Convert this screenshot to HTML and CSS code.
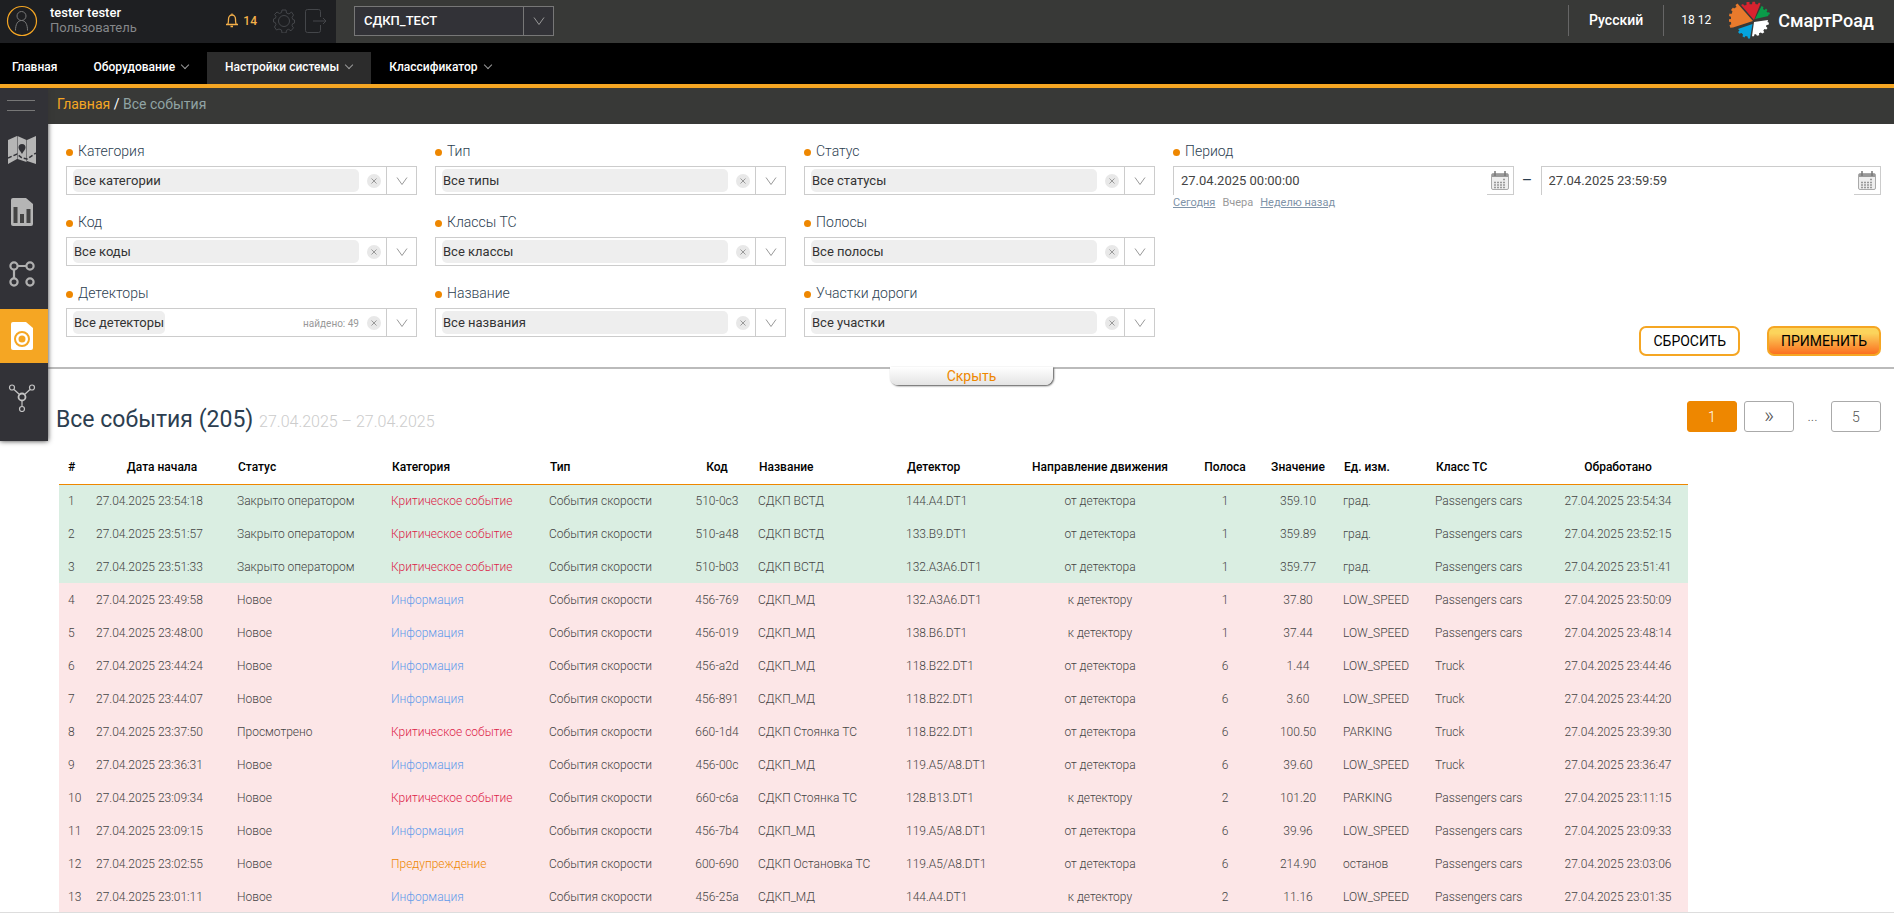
FILE: index.html
```
<!DOCTYPE html>
<html lang="ru">
<head>
    <meta charset="UTF-8">
    <meta name="viewport" content="width=device-width, initial-scale=1.0">
    <title>СмартРоад - Все события</title>
    <link rel="stylesheet" href="styles.css">
</head>
<body>

<header class="topbar">
    <div class="user">
        <svg class="avatar" viewBox="0 0 32 32" width="32" height="32" fill="none">
            <circle cx="16" cy="16" r="14.500" stroke="#f5a623" stroke-width="1.200"/>
            <path d="M15.500 6.500a4.500 4.500 0 0 1 0 9a4.500 4.500 0 0 1 0-9M9.500 25.500c0-6 2-10 6-10s6 4 6 10" stroke="#777"/>
        </svg>
        <div class="user-name">
            <b>tester tester</b>
            <span>Пользователь</span>
        </div>
        <a class="bell" href="#">
            <svg viewBox="0 0 14 15" width="14" height="15" fill="none" stroke="#f5b04a" stroke-width="1.300"><path d="M1 11.500h12M2.500 11.500c1-1 1-3 1-5.500a3.500 4 0 0 1 7 0c0 2.500 0 4.500 1 5.500M5.500 13.500h2.500M7 2V.5"/></svg>
            14
        </a>
        <button class="icon-btn" type="button" aria-label="Настройки">
            <svg viewBox="0 0 22 24" width="22" height="24" fill="none" stroke="#44464a"><circle cx="11" cy="12" r="5.500"/><path d="M9 1h4l.5 3 2.500 1 2.500-2 2 3-1.500 2.500.8 2 1.700.5v3l-2 .8-.5 2 1.500 2-2.500 3-2.500-1.500-2 1-.5 2.700H9l-.5-3-2.500-1L3.500 21l-2-3L3 15.500l-.8-2L.5 13v-3l2-.8.5-2L1.500 5.500 4 3l2.500 1.500 2-1z"/></svg>
        </button>
        <button class="icon-btn" type="button" aria-label="Выход">
            <svg viewBox="0 0 22 24" width="22" height="24" fill="none" stroke="#44464a"><path d="M15.500 8V2.500a2 2 0 0 0-2-2h-11a2 2 0 0 0-2 2v19a2 2 0 0 0 2 2h11a2 2 0 0 0 2-2V16M8 12h13M18 9l3 3-3 3"/></svg>
        </button>
    </div>
    <div class="project">
        <select aria-label="Проект">
            <option>СДКП_ТЕСТ</option>
        </select>
        <svg viewBox="0 0 12 8" width="12" height="8"><path d="M1 .5l5 7 5-7" fill="none" stroke="#999"/></svg>
    </div>
    <div class="topbar-right">
        <a class="lang" href="#">Русский</a>
        <span class="clock">18 12</span>
        <a class="logo" href="#">
            <svg viewBox="0 0 42 38" width="42" height="38">
                <path fill="#e87a2c" d="M25 20 9.500 2.500 7.500 4 8.500 6 6 7.500 5 6.500 3 9l1.500 1.500L3.500 13 1.500 12.500 1 15l2 .8V18l-2 .3v2.500l2 .2.200 2.200-1.700 1 .8 2.500L5 26.500z"/>
                <path fill="#d8232f" d="M26 19 13 4l2-1 1.300 1.600L18.500 4V1h3v2.300h2.500L24.500.8h2.500L27.500 3l2 .5L31 1.500l1.500 1z"/>
                <path fill="#0a9b49" d="M27 18 33.500 5l2 1-.5 2 1.500 1 1.500-1.500 1.500 1.500-1 1.500 1.500 1.200L41 11l1 2-2 1 .5 1z"/>
                <path fill="#fff" d="M26 21l14-2-.5 2 1.500.8-.5 2-2 .2-.5 1.500 1.500 1.500-1.200 1.500-1.800-.5-1.200 1.500 1 1.800-2 1.200-1.500-1-1.800.8.2 2-2.200.5-1-1.500h-1.500l-.5 2H24z"/>
                <path fill="#05a3dc" d="M24.500 23 22 37.500h-2l-.5-2-2-.5-1 1.500-2-1 .5-2-1.500-1.500-2 .8L10 31l1.500-1.500L10 28z"/>
            </svg>
            СмартРоад
        </a>
    </div>
</header>

<nav class="menu">
    <a href="#">Главная</a>
    <a href="#" class="has-sub">Оборудование</a>
    <a href="#" class="has-sub active">Настройки системы</a>
    <a href="#" class="has-sub">Классификатор</a>
</nav>

<div class="layout">
    <aside class="sidebar">
        <button class="burger" type="button" aria-label="Меню"></button>
        <a href="#" aria-label="Карта">
            <svg viewBox="0 0 28 28" width="28" height="28">
                <path fill="#b5b5b5" d="M0 4l9-4v23l-9 5zM9.500 0l9 4v22l-9-3zM19 4l9-4v28l-9-3z"/>
                <path fill="#323237" d="M14 18c-1.500-3-3.500-4.500-3.500-6.500a3.500 3.500 0 0 1 7 0c0 2-2 3.500-3.500 6.500z"/>
                <path d="M0 22l9-4 5 4 5 1 9-6" fill="none" stroke="#323237" stroke-width="1.500" stroke-dasharray="4 2"/>
            </svg>
        </a>
        <a href="#" aria-label="Отчёты">
            <svg viewBox="0 0 22 28" width="22" height="28">
                <path fill="#b5b5b5" d="M2 0h13l7 6v20a2 2 0 0 1-2 2H2a2 2 0 0 1-2-2V2a2 2 0 0 1 2-2z"/>
                <path fill="#444" d="M2.500 9h4v16h-4zM9 16h4v9H9zM15.500 11h4v14h-4z"/>
            </svg>
        </a>
        <a href="#" aria-label="Узлы">
            <svg viewBox="0 0 28 28" width="28" height="28" fill="none" stroke="#b0b0b0" stroke-width="2.200">
                <circle cx="6" cy="6" r="3.600"/><circle cx="22" cy="6" r="3.600"/><circle cx="6" cy="22" r="3.600"/><circle cx="22" cy="22" r="3.600"/>
                <path d="M10 6h8M6 10v8"/>
            </svg>
        </a>
        <a href="#" class="active" aria-label="События">
            <svg viewBox="0 0 22 28" width="22" height="28">
                <path fill="#fff" d="M2 0h13l7 6v20a2 2 0 0 1-2 2H2a2 2 0 0 1-2-2V2a2 2 0 0 1 2-2z"/>
                <circle cx="11" cy="17" r="7" fill="none" stroke="#f5a623" stroke-width="2"/>
                <circle cx="11" cy="17" r="3.500" fill="#f5a623"/>
            </svg>
        </a>
        <a href="#" aria-label="Сеть">
            <svg viewBox="0 0 28 28" width="28" height="28" fill="none" stroke="#c4c4c4" stroke-width="1.200">
                <circle cx="4" cy="3.500" r="2.500"/><circle cx="24" cy="3.500" r="2.500"/><circle cx="14" cy="25" r="2.500"/>
                <circle cx="14" cy="13" r="3.500" stroke-width="1.800"/>
                <path d="M6 5.500l5.500 5M22 5.500l-5.500 5M14 16.500v6"/>
            </svg>
        </a>
    </aside>

    <main>
        <div class="breadcrumbs">
            <a href="#">Главная</a> <i>/</i> <span>Все события</span>
        </div>

        <form class="filters">
            <div class="filter-grid" id="filters">
                <!-- выпадающие списки добавляются скриптом -->
                <div class="field period">
                    <label for="date-from">Период</label>
                    <div class="period-row">
                        <div class="date-box">
                            <input id="date-from" type="text" value="27.04.2025 00:00:00">
                            <button type="button" aria-label="Календарь"></button>
                        </div>
                        <span>–</span>
                        <div class="date-box">
                            <input aria-label="Период до" type="text" value="27.04.2025 23:59:59">
                            <button type="button" aria-label="Календарь"></button>
                        </div>
                    </div>
                    <div class="quick">
                        <a href="#">Сегодня</a>
                        <span>Вчера</span>
                        <a href="#">Неделю назад</a>
                    </div>
                </div>
                <div class="buttons">
                    <button class="btn" type="reset">СБРОСИТЬ</button>
                    <button class="btn btn-apply" type="button">ПРИМЕНИТЬ</button>
                </div>
            </div>
            <button class="hide-tab" type="button">Скрыть</button>
        </form>

        <div class="title-row">
            <h1>Все события (205) <small>27.04.2025 – 27.04.2025</small></h1>
            <div class="pager">
                <button class="current" type="button">1</button>
                <button class="next" type="button">»</button>
                <span>...</span>
                <button type="button">5</button>
            </div>
        </div>

        <table class="events">
            <thead>
            <tr>
                <th class="num">#</th>
                <th class="date center">Дата начала</th>
                <th class="status">Статус</th>
                <th class="category">Категория</th>
                <th class="type">Тип</th>
                <th class="code center">Код</th>
                <th class="name">Название</th>
                <th class="detector">Детектор</th>
                <th class="direction center">Направление движения</th>
                <th class="lane center">Полоса</th>
                <th class="value center">Значение</th>
                <th class="unit">Ед. изм.</th>
                <th class="vehicle">Класс ТС</th>
                <th class="processed center">Обработано</th>
            </tr>
            </thead>
            <tbody id="data-table"></tbody>
        </table>
    </main>
</div>

<script src="script.js"></script>
</body>
</html>
```
FILE: styles.css
```
* {
    box-sizing: border-box;
}
body {
    margin: 0;
    height: 100vh;
    overflow: hidden;
    background: #fff;
    color: #2c3e50;
    font-family: Roboto, "Liberation Sans", sans-serif;
    font-size: 13px;
}
a {
    color: inherit;
    text-decoration: none;
}
button, input, select {
    font-family: inherit;
    margin: 0;
}
button {
    cursor: pointer;
}

/* Верхняя панель */
.topbar {
    display: flex;
    height: 43px;
    background: #383937;
    color: #fff;
}
.user {
    display: flex;
    align-items: center;
    width: 336px;
    padding: 0 9px 2px 6px;
    background: #1e1f22;
}
.user-name {
    flex: 1;
    margin-left: 12px;
    padding-bottom: 2px;
    line-height: 15px;
}
.user-name b {
    display: block;
    font-weight: 500;
}
.user-name span {
    color: #85878a;
}
.bell {
    display: flex;
    align-items: center;
    gap: 4px;
    margin-right: 16px;
    color: #f5b04a;
    font-size: 12px;
    font-weight: 500;
}
.icon-btn {
    display: flex;
    padding: 0;
    border: 0;
    background: none;
}
.icon-btn + .icon-btn {
    margin-left: 10px;
}
.project {
    position: relative;
    margin: 6px 0 0 18px;
}
.project select {
    display: block;
    width: 200px;
    height: 30px;
    padding: 0 9px 2px;
    border: 1px solid #777;
    border-radius: 0;
    appearance: none;
    background: linear-gradient(#777, #777) 168px 0 / 1px 30px no-repeat #323237;
    color: #fff;
    font-size: 13px;
    font-weight: 500;
}
.project svg {
    position: absolute;
    right: 9px;
    top: 11px;
    pointer-events: none;
}
.topbar-right {
    display: flex;
    align-items: center;
    margin-left: auto;
    padding: 0 20px 3px 0;
}
.lang {
    padding: 7px 20px;
    border: solid #666;
    border-width: 0 1px;
    font-size: 14px;
    font-weight: 500;
    line-height: 17px;
}
.clock {
    padding: 0 17px;
    font-size: 12px;
}
.logo {
    display: flex;
    align-items: center;
    gap: 8px;
    font-size: 18px;
    font-weight: 500;
}

/* Меню */
.menu {
    display: flex;
    height: 45px;
    padding-top: 9px;
    border-bottom: 4px solid #f5a623;
    background: #000;
    color: #fff;
    font-size: 12px;
    font-weight: 500;
}
.menu a {
    padding: 0 18px 0 12px;
    line-height: 30px;
}
.menu .has-sub {
    padding: 0 18px;
}
.menu .has-sub:after {
    content: '';
    display: inline-block;
    width: 5px;
    height: 5px;
    margin: 0 1px 3px 7px;
    border: solid #999;
    border-width: 0 1px 1px 0;
    transform: rotate(45deg);
}
.menu .active {
    background: #2c2c2c;
}

.layout {
    display: flex;
    align-items: flex-start;
    height: calc(100vh - 88px);
    border-bottom: 1px solid #ddd;
    overflow: hidden;
}

/* Боковая панель */
.sidebar {
    position: relative;
    flex: none;
    width: 48px;
    padding-bottom: 16px;
    background: #323237;
    box-shadow: 0 0 5px #333;
    z-index: 1;
}
.sidebar a, .burger {
    display: flex;
    align-items: center;
    width: 48px;
    height: 54px;
    padding-left: 8px;
}
.sidebar a svg {
    display: block;
}
.sidebar a svg[width="22"] {
    margin-left: 3px;
}
.sidebar .burger {
    height: 35px;
    border: 0;
    background: none;
    padding: 0 0 0 7px;
}
.burger:after {
    content: '';
    width: 28px;
    height: 9px;
    border: solid #777;
    border-width: 1px 0;
}
.sidebar a + a {
    margin-top: 8px;
}
.sidebar .active {
    background: #f5a623;
}

main {
    flex: 1;
    min-width: 0;
}
.breadcrumbs {
    height: 36px;
    padding-left: 9px;
    background: #383937;
    color: #fff;
    font-size: 14px;
    line-height: 32px;
}
.breadcrumbs a {
    color: #f5a623;
}
.breadcrumbs i {
    font-style: normal;
}
.breadcrumbs span {
    color: #90a4a4;
}

/* Фильтры */
.filters {
    position: relative;
    padding: 18px 13px 11px 18px;
    border-bottom: 2px solid #bbb;
}
.filter-grid {
    display: grid;
    grid-template-columns: 351fr 351fr 351fr 708fr;
    gap: 18px;
}
.field label {
    display: flex;
    align-items: center;
    gap: 5px;
    height: 18px;
    margin-bottom: 6px;
    font-size: 14px;
    font-weight: 300;
}
.field label:before {
    content: '';
    width: 7px;
    height: 7px;
    margin-top: 3px;
    border-radius: 50%;
    background: #ee8700;
}
.select {
    display: flex;
    align-items: center;
    height: 29px;
    padding-left: 6px;
    border: 1px solid #ccc;
}
.select input {
    flex: 1;
    min-width: 0;
    height: 23px;
    padding: 0 1px 1px;
    border: 0;
    border-radius: 5px;
    background: #eee;
    color: #333;
    font-size: 13px;
}
.select .short {
    flex: none;
    width: 92px;
}
.select small {
    margin-left: auto;
    padding-top: 2px;
    color: #999;
    font-size: 10px;
}
.select .clear {
    display: flex;
    align-items: center;
    justify-content: center;
    width: 14px;
    height: 14px;
    padding: 0;
    margin: 0 5px 0 8px;
    border: 0;
    border-radius: 50%;
    background: #e8e8e8;
}
.select .open {
    display: flex;
    align-items: center;
    justify-content: center;
    align-self: stretch;
    width: 30px;
    padding: 0;
    border: 0;
    border-left: 1px solid #ccc;
    background: none;
}
.period {
    grid-column: 4;
    grid-row: 1 / 3;
}
.period-row {
    display: flex;
    align-items: center;
}
.period-row > span {
    width: 27px;
    font-size: 16px;
    text-align: center;
}
.date-box {
    display: flex;
    flex: 1;
    height: 29px;
    border: solid #ccc;
    border-width: 1px 1px 0;
}
.date-box input {
    flex: 1;
    min-width: 0;
    padding: 0 7px 1px;
    border: 0;
    background: none;
    color: #444;
    font-size: 13px;
}
.date-box button {
    display: flex;
    align-items: center;
    padding: 0 4px;
    border: 0;
    border-bottom: 1px solid #ccc;
    background: none;
}
.quick {
    display: flex;
    gap: 7px;
    padding-top: 1px;
    color: #999;
    font-size: 11px;
}
.quick a {
    color: #7f93a8;
    text-decoration: underline;
}
.buttons {
    grid-area: 3 / 4;
    display: flex;
    align-items: flex-end;
    justify-content: flex-end;
    gap: 27px;
    height: 72px;
}
.btn {
    height: 30px;
    padding: 0 12px;
    border: 2px solid #f5a623;
    border-radius: 7px;
    background: #fff;
    color: #000;
    font-size: 14px;
}
.btn-apply {
    background: linear-gradient(#fbd45c 20%, #fb6f20);
}
.hide-tab {
    position: absolute;
    left: calc(50% - 81px);
    top: 100%;
    width: 163px;
    height: 18px;
    padding: 0;
    border: 0;
    border-radius: 0 0 8px 8px;
    background: linear-gradient(#fff, #e4e4e4);
    box-shadow: 1px 1px 2px #555;
    color: #ee8700;
    font-size: 14px;
    line-height: 16px;
}

.title-row {
    display: flex;
    justify-content: space-between;
    padding: 32px 13px 0 8px;
}
h1 {
    margin: 0;
    font-size: 23px;
    font-weight: 400;
    line-height: 38px;
}
h1 small {
    color: #ccc;
    font-size: 16px;
    font-weight: 300;
}
.pager {
    display: flex;
    gap: 7px;
    color: #555;
    font-size: 14px;
    font-weight: 300;
}
.pager button {
    width: 50px;
    height: 31px;
    border: 1px solid #aaa;
    border-radius: 3px;
    background: #fff;
    color: #555;
    font-size: 14px;
    font-weight: 300;
}
.pager .current {
    border-color: #ee8700;
    background: #ee8700;
    color: #fff;
}
.pager .next {
    padding: 0 0 3px;
    font-size: 22px;
}
.pager span {
    width: 23px;
    line-height: 31px;
    text-align: center;
}

/* Таблица событий */
.events {
    table-layout: fixed;
    width: 1629px;
    margin: 10px 0 0 11px;
    border-collapse: collapse;
    font-size: 12px;
}
.events th, .events td {
    height: 33px;
    padding: 0 6px;
    text-align: left;
    white-space: nowrap;
}
.events th {
    padding: 0 0 0 7px;
    border-bottom: 1px solid #ee8700;
    color: #000;
    font-weight: 500;
}
.events .center {
    padding: 0;
    text-align: center;
}
.events td {
    color: #444;
    font-weight: 300;
}
.events .num {
    width: 28px;
    padding: 0 0 0 9px;
}
.events td.date {
    padding-left: 9px;
}
.events th.date {
    padding-left: 6px;
}
.date { width: 144px; }
.status { width: 154px; }
.category { width: 158px; }
.type { width: 139px; }
.code { width: 70px; }
.name { width: 148px; }
.detector { width: 109px; }
.direction { width: 182px; }
.lane { width: 68px; }
.value { width: 78px; }
.unit { width: 92px; }
.vehicle { width: 119px; }
.processed { width: 140px; }
.closed {
    background: #daeee2;
}
.new {
    background: #fce6e7;
}
.events .critical {
    color: #dc2349;
}
.events .info {
    color: #629bea;
}
.events .warning {
    color: #ee8700;
}
```
FILE: script.js
```
// Фильтры: подпись, значение, найдено
const filters = [
    ['Категория', 'Все категории'],
    ['Тип', 'Все типы'],
    ['Статус', 'Все статусы'],
    ['Код', 'Все коды'],
    ['Классы ТС', 'Все классы'],
    ['Полосы', 'Все полосы'],
    ['Детекторы', 'Все детекторы', 49],
    ['Название', 'Все названия'],
    ['Участки дороги', 'Все участки']
];

const period = document.querySelector('.period');
filters.forEach(([label, value, found], i) => {
    const field = document.createElement('div');
    field.className = 'field';
    field.innerHTML = `
        <label for="filter-${i}">${label}</label>
        <div class="select">
            <input id="filter-${i}" type="text" value="${value}" ${found ? 'class="short"' : ''}>
            ${found ? `<small>найдено: ${found}</small>` : ''}
            <button class="clear" type="button" aria-label="Очистить"><svg viewBox="0 0 6 6" width="6" height="6"><path d="M.5.5l5 5M5.500.5l-5 5" stroke="#999"/></svg></button>
            <button class="open" type="button" aria-label="Открыть"><svg viewBox="0 0 12 8" width="12" height="8"><path d="M1 .5l5 7 5-7" fill="none" stroke="#999"/></svg></button>
        </div>`;
    period.before(field);
});

// Иконка календаря
document.querySelectorAll('.date-box button').forEach(button => {
    button.innerHTML = `<svg viewBox="0 0 18 19" width="18" height="19">
        <rect x=".5" y="2.500" width="17" height="16" rx="1.500" fill="#eee" stroke="#aaa"/>
        <path d="M1 3h16v3H1z" fill="#999"/>
        <path d="M4 0v5M14 0v5" stroke="#777" stroke-width="1.500"/>
        <path d="M12 8.500h3M3 11.500h12M3 14h12M3 16.500h12" stroke="#999" stroke-width="1.500" stroke-dasharray="2 1"/>
    </svg>`;
});

const SPEED = 'События скорости';
const CARS = 'Passengers cars';
const from = 'от детектора';
const to = 'к детектору';

const data = [
    ['23:54:18', 'Закрыто оператором', 'critical', '510-0c3', 'СДКП ВСТД', '144.A4.DT1', from, 1, '359.10', 'град.', CARS, '23:54:34'],
    ['23:51:57', 'Закрыто оператором', 'critical', '510-a48', 'СДКП ВСТД', '133.B9.DT1', from, 1, '359.89', 'град.', CARS, '23:52:15'],
    ['23:51:33', 'Закрыто оператором', 'critical', '510-b03', 'СДКП ВСТД', '132.A3A6.DT1', from, 1, '359.77', 'град.', CARS, '23:51:41'],
    ['23:49:58', 'Новое', 'info', '456-769', 'СДКП_МД', '132.A3A6.DT1', to, 1, '37.80', 'LOW_SPEED', CARS, '23:50:09'],
    ['23:48:00', 'Новое', 'info', '456-019', 'СДКП_МД', '138.B6.DT1', to, 1, '37.44', 'LOW_SPEED', CARS, '23:48:14'],
    ['23:44:24', 'Новое', 'info', '456-a2d', 'СДКП_МД', '118.B22.DT1', from, 6, '1.44', 'LOW_SPEED', 'Truck', '23:44:46'],
    ['23:44:07', 'Новое', 'info', '456-891', 'СДКП_МД', '118.B22.DT1', from, 6, '3.60', 'LOW_SPEED', 'Truck', '23:44:20'],
    ['23:37:50', 'Просмотрено', 'critical', '660-1d4', 'СДКП Стоянка ТС', '118.B22.DT1', from, 6, '100.50', 'PARKING', 'Truck', '23:39:30'],
    ['23:36:31', 'Новое', 'info', '456-00c', 'СДКП_МД', '119.A5/A8.DT1', from, 6, '39.60', 'LOW_SPEED', 'Truck', '23:36:47'],
    ['23:09:34', 'Новое', 'critical', '660-c6a', 'СДКП Стоянка ТС', '128.B13.DT1', to, 2, '101.20', 'PARKING', CARS, '23:11:15'],
    ['23:09:15', 'Новое', 'info', '456-7b4', 'СДКП_МД', '119.A5/A8.DT1', from, 6, '39.96', 'LOW_SPEED', CARS, '23:09:33'],
    ['23:02:55', 'Новое', 'warning', '600-690', 'СДКП Остановка ТС', '119.A5/A8.DT1', from, 6, '214.90', 'останов', CARS, '23:03:06'],
    ['23:01:11', 'Новое', 'info', '456-25a', 'СДКП_МД', '144.A4.DT1', to, 2, '11.16', 'LOW_SPEED', CARS, '23:01:35']
];

const categories = {
    critical: 'Критическое событие',
    info: 'Информация',
    warning: 'Предупреждение'
};

const tableBody = document.getElementById('data-table');
data.forEach((item, i) => {
    const [time, status, category, code, name, detector, direction, lane, value, unit, vehicle, processed] = item;
    const row = document.createElement('tr');
    row.className = status.startsWith('Закрыто') ? 'closed' : 'new';

    const cells = [
        ['num', i + 1],
        ['date', '27.04.2025 ' + time],
        ['', status],
        [category, categories[category]],
        ['', SPEED],
        ['center', code],
        ['', name],
        ['', detector],
        ['center', direction],
        ['center', lane],
        ['center', value],
        ['', unit],
        ['', vehicle],
        ['center', '27.04.2025 ' + processed]
    ];
    cells.forEach(([cls, text]) => {
        const cell = document.createElement('td');
        cell.className = cls;
        cell.textContent = text;
        row.appendChild(cell);
    });
    tableBody.appendChild(row);
});
```
